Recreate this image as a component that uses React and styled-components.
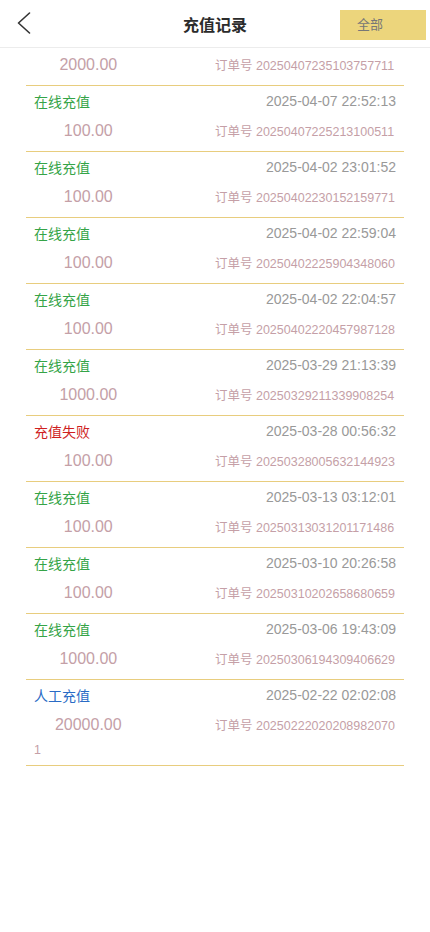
import React, { useLayoutEffect, useRef } from "react";
import styled, { createGlobalStyle } from "styled-components";

const Global = createGlobalStyle`
  html, body { margin: 0; padding: 0; background: #fff; }
  body { font-family: "Liberation Sans", "Noto Sans CJK SC", sans-serif; }
  * { box-sizing: border-box; }
`;

const Page = styled.div`
  height: 100vh;
  display: flex;
  flex-direction: column;
  background: #fff;
`;

const Header = styled.header`
  flex: none;
  height: 48px;
  border-bottom: 1px solid #ececec;
  display: grid;
  grid-template-columns: 1fr auto 1fr;
  align-items: center;
`;

const Back = styled.button`
  justify-self: start;
  margin-left: 14px;
  margin-top: -2px;
  width: 20px;
  height: 26px;
  padding: 0;
  border: 0;
  background: none;
  display: flex;
  align-items: center;
  justify-content: center;
`;

const Title = styled.h1`
  margin: 0;
  font-size: 16px;
  font-weight: 700;
  color: #2b2b2b;
  font-family: "Noto Sans CJK SC", sans-serif;
  line-height: 24px;
`;

const FilterButton = styled.button`
  justify-self: end;
  align-self: start;
  margin: 10px 4px 0 0;
  width: 86px;
  height: 30px;
  border: 0;
  background: #ecd57c;
  color: #777;
  font-size: 13px;
  line-height: 28px;
  font-family: "Noto Sans CJK SC", sans-serif;
  text-align: left;
  padding: 0 0 2px 17px;
`;

const Scroller = styled.div`
  flex: 1;
  overflow-y: auto;
  scrollbar-width: none;
  &::-webkit-scrollbar { display: none; }
`;

const List = styled.ul`
  list-style: none;
  margin: 0 26px;
  padding: 0 0 200px;
`;

const Item = styled.li`
  padding: 0 8px 5px;
  border-bottom: 1px solid #e8cd7e;
`;

const TopRow = styled.div`
  display: flex;
  justify-content: space-between;
  align-items: center;
  height: 30px;
`;

const Type = styled.span`
  font-size: 14px;
  font-family: "Noto Sans CJK SC", sans-serif;
  color: ${(p) => p.$color};
`;

const Time = styled.span`
  font-size: 14px;
  color: #999;
`;

const BottomRow = styled.div`
  line-height: 20px;
  font-size: 12.5px;
  text-align: left;
`;

const Amount = styled.span`
  display: inline-block;
  width: 30%;
  text-align: center;
  line-height: 30px;
  font-size: 16px;
  color: #c4a0a7;
`;

const Order = styled.span`
  margin-left: 20%;
  color: #c59fa7;
  word-break: break-all;
`;

const TYPE_COLORS = {
  在线充值: "#35a447",
  充值失败: "#cf1f1f",
  人工充值: "#2a6bc5",
};

const records = [
  { type: "在线充值", time: "2025-04-07 23:51:03", amount: "2000.00", order: "20250407235103757711" },
  { type: "在线充值", time: "2025-04-07 22:52:13", amount: "100.00", order: "20250407225213100511" },
  { type: "在线充值", time: "2025-04-02 23:01:52", amount: "100.00", order: "20250402230152159771" },
  { type: "在线充值", time: "2025-04-02 22:59:04", amount: "100.00", order: "20250402225904348060" },
  { type: "在线充值", time: "2025-04-02 22:04:57", amount: "100.00", order: "20250402220457987128" },
  { type: "在线充值", time: "2025-03-29 21:13:39", amount: "1000.00", order: "20250329211339908254" },
  { type: "充值失败", time: "2025-03-28 00:56:32", amount: "100.00", order: "20250328005632144923" },
  { type: "在线充值", time: "2025-03-13 03:12:01", amount: "100.00", order: "20250313031201171486" },
  { type: "在线充值", time: "2025-03-10 20:26:58", amount: "100.00", order: "20250310202658680659" },
  { type: "在线充值", time: "2025-03-06 19:43:09", amount: "1000.00", order: "20250306194309406629" },
  { type: "人工充值", time: "2025-02-22 02:02:08", amount: "20000.00", order: "202502220202089820701" },
];

export default function App() {
  const scrollRef = useRef(null);
  useLayoutEffect(() => {
    if (scrollRef.current) scrollRef.current.scrollTop = 28;
  }, []);

  return (
    <Page>
      <Global />
      <Header>
        <Back aria-label="返回">
          <svg width="14" height="22" viewBox="0 0 14 22" fill="none">
            <polyline points="12.5,1 1.5,11 12.5,21" stroke="#333" strokeWidth="1.6" strokeLinecap="round" strokeLinejoin="round" />
          </svg>
        </Back>
        <Title>充值记录</Title>
        <FilterButton>全部</FilterButton>
      </Header>
      <Scroller ref={scrollRef}>
        <List>
          {records.map((r) => (
            <Item key={r.order}>
              <TopRow>
                <Type $color={TYPE_COLORS[r.type]}>{r.type}</Type>
                <Time>{r.time}</Time>
              </TopRow>
              <BottomRow>
                <Amount>{r.amount}</Amount>
                <Order>订单号 {r.order}</Order>
              </BottomRow>
            </Item>
          ))}
        </List>
      </Scroller>
    </Page>
  );
}
